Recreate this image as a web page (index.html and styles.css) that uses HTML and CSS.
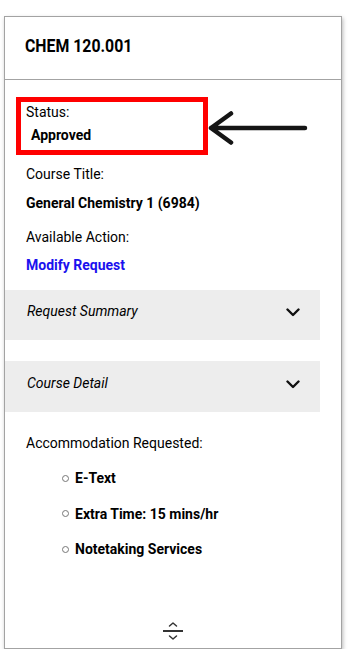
FILE: index.html
```html
<!DOCTYPE html>
<html lang="en">
<head>
<meta charset="utf-8">
<title>CHEM 120.001</title>
<link rel="stylesheet" href="styles.css">
</head>
<body>
<div class="card">
  <div class="card-header">
    <h2 class="course-code">CHEM 120.001</h2>
  </div>
  <div class="card-body">
    <div class="status-box">
      <div class="label status-label">Status:</div>
      <div class="value status-value">Approved</div>
    </div>
    <svg class="callout-arrow" width="100" height="36" viewBox="0 0 100 36" aria-hidden="true">
      <path d="M3 18 H97 M3 18 L23 3.5 M3 18 L23 32.5" fill="none" stroke="#151515" stroke-width="4.5" stroke-linecap="round" stroke-linejoin="round"/>
    </svg>

    <div class="field">
      <div class="label">Course Title:</div>
      <div class="value">General Chemistry 1 (6984)</div>
    </div>
    <div class="field">
      <div class="label">Available Action:</div>
      <a class="value action-link" href="#">Modify Request</a>
    </div>

    <div class="panel">
      <span class="panel-title">Request Summary</span>
      <svg class="chevron" width="14" height="9" viewBox="0 0 14 9" aria-hidden="true">
        <path d="M1.5 1.5 L7 7 L12.5 1.5" fill="none" stroke="#111" stroke-width="2.4" stroke-linecap="round" stroke-linejoin="round"/>
      </svg>
    </div>
    <div class="panel panel-second">
      <span class="panel-title">Course Detail</span>
      <svg class="chevron" width="14" height="9" viewBox="0 0 14 9" aria-hidden="true">
        <path d="M1.5 1.5 L7 7 L12.5 1.5" fill="none" stroke="#111" stroke-width="2.4" stroke-linecap="round" stroke-linejoin="round"/>
      </svg>
    </div>

    <div class="field accommodations">
      <div class="label">Accommodation Requested:</div>
      <ul class="acc-list">
        <li>E-Text</li>
        <li>Extra Time: 15 mins/hr</li>
        <li>Notetaking Services</li>
      </ul>
    </div>

    <div class="resize-handle">
      <svg width="20" height="18" viewBox="0 0 20 18" aria-hidden="true">
        <path d="M6.5 4 L10 1 L13.5 4" fill="none" stroke="#333" stroke-width="1.5" stroke-linecap="round" stroke-linejoin="round"/>
        <path d="M0 9 H20" stroke="#333" stroke-width="2"/>
        <path d="M6.5 14 L10 17 L13.5 14" fill="none" stroke="#333" stroke-width="1.5" stroke-linecap="round" stroke-linejoin="round"/>
      </svg>
    </div>
  </div>
</div>
</body>
</html>
```

FILE: styles.css
```css
* { box-sizing: border-box; }

html, body {
  margin: 0;
  padding: 0;
  background: #fff;
}

body {
  font-family: Roboto, "Liberation Sans", sans-serif;
  color: #000;
  font-size: 14px;
}

.card {
  margin: 16px 0 0 4px;
  width: 338px;
  height: 633px;
  border: 1px solid #a3a3a3;
  box-shadow: 1px 2px 4px rgba(0, 0, 0, 0.28);
  display: flex;
  flex-direction: column;
  background: #fff;
}

.card-header {
  height: 63px;
  padding: 18px 0 0 20px;
  border-bottom: 1px solid #a3a3a3;
  flex: none;
}

.course-code {
  margin: 0;
  display: inline-block;
  font-size: 18px;
  line-height: 21px;
  font-weight: 700;
  transform: scaleX(0.88);
  transform-origin: left center;
}

.card-body {
  position: relative;
  flex: 1;
  display: flex;
  flex-direction: column;
  padding-top: 17px;
}

.label {
  font-size: 14px;
  line-height: 20px;
  font-weight: 400;
}

.value {
  font-size: 14px;
  line-height: 20px;
  font-weight: 700;
  display: block;
}

.status-box {
  margin-left: 11px;
  width: 192px;
  border: 5px solid #ff0000;
  padding: 2px 0 7px 5px;
}

.status-label { line-height: 16px; }

.status-value {
  line-height: 16px;
  margin-top: 7px;
  padding-left: 5px;
}

.callout-arrow {
  position: absolute;
  left: 203px;
  top: 30px;
}

.field {
  padding: 0 21px;
  margin-top: 9px;
}

.field + .field { margin-top: 14px; }

.field .label { margin-bottom: 9px; }
.field .label + .action-link { margin-top: -1px; }

.action-link {
  color: #1a10ee;
  text-decoration: none;
}

.panel {
  margin: 15px 21px 0 0;
  height: 50px;
  background: #ededed;
  padding: 11px 20px 0 22px;
  display: flex;
  justify-content: space-between;
  align-items: flex-start;
}

.panel-second {
  margin-top: 21px;
  height: 51px;
  padding-top: 12px;
}

.panel-title {
  font-style: italic;
  font-size: 14px;
  line-height: 20px;
}

.chevron {
  margin-top: 7px;
  display: block;
}

.accommodations { margin-top: 21px; }

.accommodations .label { margin-bottom: 15px; }

.acc-list {
  list-style: none;
  margin: 0;
  padding: 0 0 0 36px;
}

.acc-list li {
  display: flex;
  align-items: center;
  font-weight: 700;
  font-size: 14px;
  line-height: 20px;
  margin-bottom: 15.5px;
}

.acc-list li::before {
  content: "";
  width: 5px;
  height: 5px;
  border: 1px solid #777;
  border-radius: 50%;
  margin-right: 6px;
  flex: none;
}

.resize-handle {
  margin-top: auto;
  padding-bottom: 8px;
  display: flex;
  justify-content: center;
}

.resize-handle svg { display: block; }
```
